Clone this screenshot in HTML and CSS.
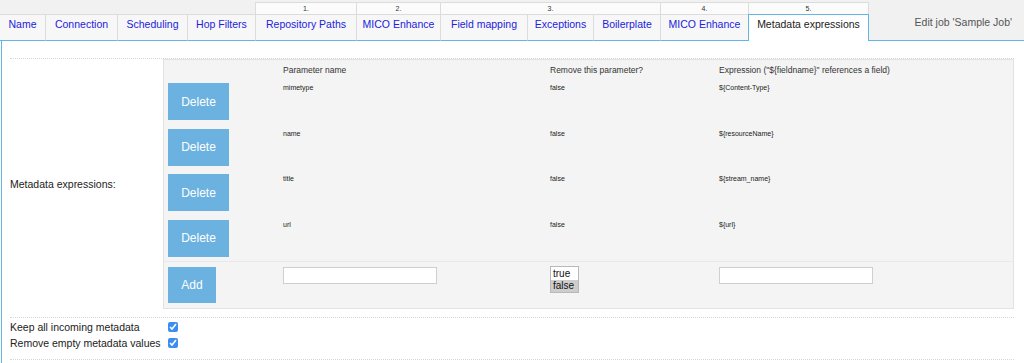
FILE: index.html
```html
<!DOCTYPE html>
<html lang="en">
<head>
<meta charset="utf-8">
<title>Edit job 'Sample Job'</title>
<link rel="stylesheet" href="styles.css">
</head>
<body>
<div class="tabs">
  <div class="blank"></div>
  <div class="num c5">1.</div>
  <div class="num c6">2.</div>
  <div class="num c7">3.</div>
  <div class="num c10">4.</div>
  <div class="num c11 num-last">5.</div>
  <div class="title">Edit job 'Sample Job'</div>
  <a class="tab first" href="#">Name</a>
  <a class="tab" href="#">Connection</a>
  <a class="tab" href="#">Scheduling</a>
  <a class="tab" href="#">Hop Filters</a>
  <a class="tab" href="#">Repository Paths</a>
  <a class="tab" href="#">MICO Enhance</a>
  <a class="tab" href="#">Field mapping</a>
  <a class="tab" href="#">Exceptions</a>
  <a class="tab" href="#">Boilerplate</a>
  <a class="tab" href="#">MICO Enhance</a>
  <div class="tab active">Metadata expressions</div>
</div>

<div class="content">
  <div class="form-row">
    <div class="label">Metadata expressions:</div>
    <div class="panel">
      <div class="prow phead">
        <span></span>
        <span>Parameter name</span>
        <span>Remove this parameter?</span>
        <span>Expression ("${fieldname}" references a field)</span>
      </div>
      <div class="prow">
        <button class="btn btn-del">Delete</button>
        <span>mimetype</span>
        <span>false</span>
        <span>${Content-Type}</span>
      </div>
      <div class="prow">
        <button class="btn btn-del">Delete</button>
        <span>name</span>
        <span>false</span>
        <span>${resourceName}</span>
      </div>
      <div class="prow">
        <button class="btn btn-del">Delete</button>
        <span>title</span>
        <span>false</span>
        <span>${stream_name}</span>
      </div>
      <div class="prow">
        <button class="btn btn-del">Delete</button>
        <span>url</span>
        <span>false</span>
        <span>${url}</span>
      </div>
      <div class="prow padd">
        <button class="btn btn-add">Add</button>
        <span><input class="field" type="text"></span>
        <span>
          <span class="listbox">
            <span class="opt">true</span>
            <span class="opt opt-sel">false</span>
          </span>
        </span>
        <span><input class="field" type="text"></span>
      </div>
    </div>
  </div>
  <div class="check-row">
    <div class="cline"><span class="clabel">Keep all incoming metadata</span><input class="cb" type="checkbox" checked></div>
    <div class="cline"><span class="clabel">Remove empty metadata values</span><input class="cb" type="checkbox" checked></div>
  </div>
</div>
</body>
</html>
```

FILE: styles.css
```css
* { box-sizing: border-box; }

html, body {
  margin: 0;
  padding: 0;
  background: #ffffff;
  font-family: "Liberation Sans", Arial, sans-serif;
  color: #222;
}

/* ---------- tab header ---------- */
.tabs {
  display: grid;
  grid-template-columns: 45px 72px 70px 68px 101px 84px 87px 66px 67px 88px 121px 1fr;
  grid-template-rows: 14px 27px;
  background: #f1f1f1;
}

.blank {
  grid-column: 1 / 5;
  grid-row: 1;
}

.num {
  grid-row: 1;
  margin-top: 2px;
  height: 12px;
  background: #fbfbfb;
  border-top: 1px solid #dcdcdc;
  border-left: 1px solid #dcdcdc;
  font-size: 7px;
  line-height: 11px;
  text-align: center;
  color: #333;
}
.c5 { grid-column: 5; }
.c6 { grid-column: 6; }
.c7 { grid-column: 7 / 10; }
.c10 { grid-column: 10; }
.c11 { grid-column: 11; }
.num-last { border-right: 1px solid #dcdcdc; }

.title {
  grid-column: 12;
  grid-row: 1 / 3;
  display: flex;
  align-items: center;
  justify-content: flex-end;
  padding: 4px 12px 0 0;
  font-size: 10.5px;
  color: #555;
  border-bottom: 1px solid #62b6e6;
}

.tab {
  grid-row: 2;
  display: block;
  background: #f7f7f7;
  border-top: 1px solid #dcdcdc;
  border-left: 1px solid #dcdcdc;
  border-bottom: 1px solid #62b6e6;
  padding-top: 3px;
  font-size: 10.5px;
  line-height: 13px;
  text-align: center;
  white-space: nowrap;
  color: #2222dd;
  text-decoration: none;
}
.tab.first { border-left: none; }

.tab.active {
  background: #ffffff;
  color: #222;
  border: 1px solid #62b6e6;
  border-bottom: none;
}

/* ---------- content ---------- */
.content {
  margin-left: 1px;
  border-left: 1px solid #62b6e6;
  padding-top: 17px;
  padding-bottom: 20px;
}

.form-row {
  display: grid;
  grid-template-columns: 153px 1fr;
  align-items: center;
  margin: 0 10px 0 8px;
  padding-bottom: 8px;
  border-top: 1px dotted #d6d6d6;
}

.label {
  font-size: 10.5px;
  color: #222;
}

.panel {
  background: #f4f4f4;
  border: 1px solid #e2e2e2;
  padding: 0 0 5px 4px;
}

.prow {
  display: grid;
  grid-template-columns: 115px 267px 169px 1fr;
  align-items: start;
  padding: 4px 0 4.5px;
  font-size: 7px;
  line-height: 10px;
  color: #222;
}

.phead {
  height: 19px;
  padding: 0;
  align-items: center;
  font-size: 8.5px;
  color: #333;
}

.padd {
  border-top: 1px solid #e9e9e9;
  margin-left: -4px;
  padding: 5px 0 0 4px;
}

.btn {
  display: block;
  border: none;
  margin: 0;
  padding: 0;
  background: #6cb2e0;
  color: #ffffff;
  font-family: "Liberation Sans", Arial, sans-serif;
  font-size: 12px;
}
.btn-del { width: 61px; height: 37px; }
.btn-add { width: 48px; height: 36px; }

.field {
  display: block;
  width: 154px;
  height: 17px;
  margin: 0;
  border: 1px solid #cfcfcf;
  background: #ffffff;
}

.listbox {
  display: block;
  width: 29px;
  height: 27px;
  margin-top: -1px;
  border: 1px solid #b8b8b8;
  background: #ffffff;
  font-size: 10px;
  line-height: 12px;
  color: #111;
  padding-top: 1px;
}
.opt { display: block; padding-left: 2px; }
.opt-sel { background: #cdcdcd; }

.check-row {
  margin: 0 10px 0 8px;
  padding: 1px 0 8px;
  border-top: 1px dotted #d6d6d6;
  border-bottom: 1px dotted #d6d6d6;
}

.cline {
  display: grid;
  grid-template-columns: 158px 1fr;
  align-items: center;
  height: 16px;
  font-size: 10.5px;
  color: #222;
}

.cb {
  width: 10px;
  height: 10px;
  margin: 0;
  accent-color: #3b8ef0;
}
```
